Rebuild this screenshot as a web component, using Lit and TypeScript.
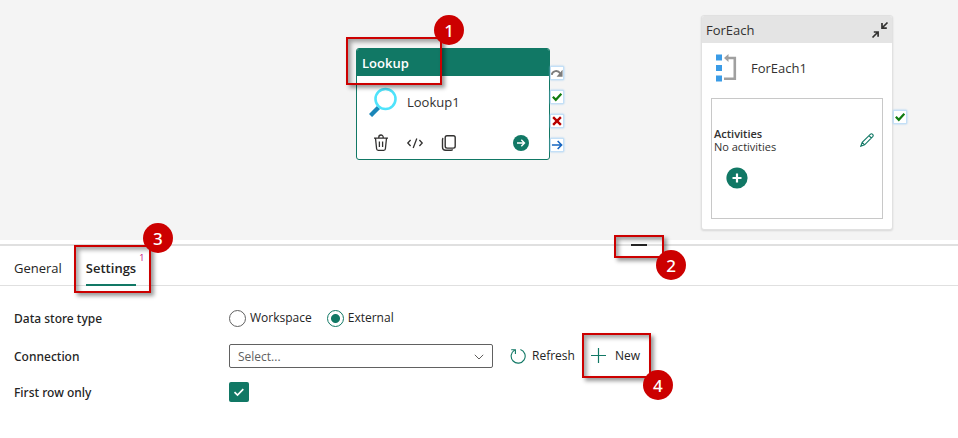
import { LitElement, html, css, svg, nothing } from "lit";
import { customElement, property } from "lit/decorators.js";

const icons = {
  magnifier: html`<svg width="28" height="30" viewBox="0 0 28 30" aria-hidden="true">
    <path d="M1.500 28.500 9.500 20.500" stroke="#1a86b8" stroke-width="4.4" fill="none" />
    <circle cx="16.5" cy="12" r="10" fill="#fff" stroke="#4fe3fb" stroke-width="2.6" />
  </svg>`,
  trash: html`<svg width="18" height="18" viewBox="0 0 18 18" fill="none" stroke="#323130" stroke-width="1.3" aria-hidden="true">
    <path d="M2 4.1H16M6.8 4V3.2a2.2 2.2 0 0 1 4.4 0V4M3.5 4.3l1.1 10.5a1.6 1.6 0 0 0 1.6 1.5h5.6a1.6 1.6 0 0 0 1.6-1.5L14.5 4.3M7.4 7.4v5.6M10.6 7.4v5.6" />
  </svg>`,
  code: html`<svg width="18" height="18" viewBox="0 0 18 18" fill="none" stroke="#323130" stroke-width="1.3" aria-hidden="true">
    <path d="M4.600 6 1.800 9l2.800 3M13.400 6 16.200 9l-2.800 3M10.800 4.500 7.200 14" />
  </svg>`,
  copy: html`<svg width="18" height="18" viewBox="0 0 18 18" fill="none" stroke="#323130" stroke-width="1.4" aria-hidden="true">
    <rect x="5.2" y="1.7" width="10" height="12.4" rx="1.8" />
    <path d="M3.2 4.2c-.6.4-.7.9-.7 1.6v7.3a3.2 3.2 0 0 0 3.2 3.2h5.2c.8 0 1.4-.3 1.7-.9" />
  </svg>`,
  go: html`<svg width="18" height="18" viewBox="0 0 18 18" aria-hidden="true">
    <circle cx="9" cy="9" r="8" fill="#117865" />
    <path d="M5 9h7.5M9.3 5.8 12.5 9l-3.2 3.2" fill="none" stroke="#fff" stroke-width="1.4" />
  </svg>`,
  collapse: html`<svg width="18" height="18" viewBox="0 0 18 18" fill="none" stroke="#323130" stroke-width="1.7" aria-hidden="true">
    <path d="M16.5 1.500 11.500 6.500M11 2v5.100h4.800M1.500 16.500l5-5M2.800 11h4.300v4.800" />
  </svg>`,
  loop: html`<svg width="22" height="28" viewBox="0 0 22 28" aria-hidden="true">
    <path d="M0 .5h6v6H0zM0 11h6v6H0zM0 21.5h6v6H0z" fill="#3a9be6" />
    <path d="M8 4 12.500 0v8z" fill="#a0a0a0" />
    <path d="M11 4H18.800V24.800H8" fill="none" stroke="#a0a0a0" stroke-width="2.6" />
  </svg>`,
  pencil: html`<svg width="14" height="14" viewBox="0 0 14 14" fill="none" stroke="#117865" stroke-width="1.1" aria-hidden="true">
    <path d="M10.300 1.300a1.700 1.700 0 0 1 2.400 2.400L4.600 11.800.8 13.200 2.200 9.400zM9 2.700 11.300 5M2.200 9.400l2.400 2.400" />
  </svg>`,
  add: html`<svg width="22" height="22" viewBox="0 0 22 22" aria-hidden="true">
    <circle cx="11" cy="11" r="10.6" fill="#117865" />
    <path d="M6.500 11h9M11 6.500v9" stroke="#fff" stroke-width="2.2" />
  </svg>`,
  refresh: html`<svg width="16" height="16" viewBox="0 0 16 16" fill="none" stroke="#117865" stroke-width="1.1" aria-hidden="true">
    <path d="M10.400 1.500A7 7 0 1 1 4.600 2.100M1.200 1.700h4.200v4.200" />
  </svg>`,
  plus: html`<svg width="16" height="16" viewBox="0 0 16 16" stroke="#117865" stroke-width="1.2" aria-hidden="true">
    <path d="M0 7.500h15M7.500 0v15" />
  </svg>`,
  chevron: html`<svg width="10" height="6" viewBox="0 0 10 6" fill="none" stroke="#605e5c" stroke-width="1" aria-hidden="true">
    <path d="M.8.8 5 5 9.200.8" />
  </svg>`,
};

const portMarks: Record<string, unknown> = {
  Skipped: svg`<path d="M.8 8.500C1.500 3.800 7.500 2.800 10 7" fill="none" stroke="#7d7d7d" stroke-width="2" /><path d="M12.500 3v7.500H6z" fill="#7d7d7d" />`,
  Succeeded: svg`<path d="M2 6.200 5.200 9.500 11.200 3" fill="none" stroke="#107c10" stroke-width="2.400" />`,
  Failed: svg`<path d="M2.300 2.300 10.700 10.700M10.700 2.300 2.300 10.700" stroke="#b80000" stroke-width="2.600" />`,
  Completed: svg`<path d="M1 6.500H11.500M7.200 2.200 11.500 6.500 7.200 10.800" fill="none" stroke="#1565c0" stroke-width="1.700" />`,
};

@customElement("step-callout")
export class StepCallout extends LitElement {
  @property({ type: Number }) step = 0;

  static styles = css`
    :host {
      position: absolute;
      z-index: 2;
      box-sizing: border-box;
      border: 2px solid #cc0000;
      box-shadow:
        3px 3px 4px rgba(0, 0, 0, 0.4),
        inset 3px 3px 4px rgba(0, 0, 0, 0.35);
      pointer-events: none;
    }
    .badge {
      position: absolute;
      right: -24px;
      top: -24px;
      display: grid;
      place-items: center;
      width: 30px;
      height: 30px;
      border-radius: 50%;
      background: #cc0000;
      color: #fff;
      font: 500 17px/1 "Noto Sans", "Open Sans", sans-serif;
    }
    :host([low]) .badge {
      top: auto;
      bottom: -24px;
    }
  `;

  render() {
    return html`<span class="badge">${this.step}</span>`;
  }
}

@customElement("activity-ports")
export class ActivityPorts extends LitElement {
  @property({ attribute: false }) outcomes: string[] = [];

  static styles = css`
    :host {
      position: absolute;
      left: calc(100% + 1px);
      display: flex;
      flex-direction: column;
      gap: 10px;
    }
    .port {
      display: block;
      box-sizing: border-box;
      width: 14px;
      height: 14px;
      padding: 0;
      border: 1px solid #c3dff7;
      border-radius: 1px;
      background: #fff;
      box-shadow: 0 0 2px #8fc3ee;
    }
    svg {
      display: block;
      width: 12px;
      height: 12px;
    }
  `;

  render() {
    return this.outcomes.map(
      (o) => html`<button class="port" aria-label=${o}><svg viewBox="0 0 13 13">${portMarks[o]}</svg></button>`,
    );
  }
}

@customElement("app-root")
export class AppRoot extends LitElement {
  static styles = css`
    :host {
      display: block;
      min-height: 100vh;
      background: #fff;
      color: #242424;
      font: 12px/16px "Open Sans", "Noto Sans", sans-serif;
    }
    button,
    select {
      font: inherit;
      color: inherit;
    }
    button {
      display: flex;
      align-items: center;
      padding: 0;
      border: 0;
      background: none;
    }
    svg {
      display: block;
      flex: none;
    }
    .canvas {
      position: relative;
      height: 240px;
      background: #f4f4f4;
    }
    .node {
      position: absolute;
      box-sizing: border-box;
      border: 1px solid #e1e1e1;
      border-radius: 3px;
      background: #fff;
      color: #323130;
      font-size: 13px;
    }
    .node-head {
      display: flex;
      align-items: center;
      justify-content: space-between;
      height: 27px;
      padding: 0 3px 0 4px;
      border-radius: 2px 2px 0 0;
      background: #e4e4e4;
    }
    .lookup {
      left: 356px;
      top: 48px;
      width: 194px;
      padding-bottom: 1px;
      border-color: #117865;
    }
    .lookup .node-head {
      padding: 0 5px;
      background: #117865;
      color: #fff;
      font-weight: 600;
    }
    .foreach {
      left: 701px;
      top: 15px;
      width: 192px;
      padding-bottom: 10px;
      box-shadow: 0 1px 2px rgba(0, 0, 0, 0.12);
    }
    .node-title {
      display: flex;
      align-items: center;
      gap: 10px;
      height: 52px;
      padding: 0 12px;
    }
    .foreach .node-title {
      gap: 13px;
      height: 50px;
      padding: 0 14px;
      margin-bottom: 5px;
    }
    .node-actions {
      display: flex;
      align-items: center;
      gap: 16px;
      height: 30px;
      padding: 0 19px 0 15px;
    }
    .push {
      margin-left: auto;
    }
    .lookup activity-ports {
      top: 17px;
    }
    .foreach activity-ports {
      top: 94px;
    }
    .inner {
      box-sizing: border-box;
      height: 121px;
      margin: 0 9px;
      padding: 28px 8px 0 2px;
      border: 1px solid #c8c8c8;
      font-size: 11px;
      line-height: 13px;
    }
    .inner-row {
      display: flex;
      align-items: center;
      justify-content: space-between;
    }
    .strong {
      font-weight: 600;
    }
    .inner .add {
      margin: 14px 0 0 12px;
    }
    .divider {
      display: flex;
      height: 10px;
      padding-left: 64.1%;
      background: linear-gradient(#e0e0e0, #e0e0e0) 0 4px / 100% 2px no-repeat;
    }
    .handle {
      position: relative;
      justify-content: center;
      width: 50px;
      height: 10px;
    }
    .handle-bar {
      width: 16px;
      height: 2px;
      background: #242424;
    }
    .tabs {
      display: flex;
      gap: 24px;
      height: 35px;
      padding: 0 14px;
      border-bottom: 1px solid #e0e0e0;
      font-size: 13px;
    }
    .tab {
      position: relative;
      box-sizing: border-box;
      height: 36px;
      padding-top: 2px;
      border-bottom: 2px solid transparent;
    }
    .tab[aria-selected="true"] {
      border-color: #117865;
      font-weight: 600;
    }
    .count {
      position: absolute;
      left: calc(100% + 3px);
      top: 0;
      color: #c4007a;
      font-size: 9px;
      font-weight: 400;
    }
    .form {
      display: grid;
      grid-template-columns: 215px 1fr;
      align-items: center;
      row-gap: 14px;
      padding: 20px 14px;
    }
    .label {
      padding-top: 1px;
      font-family: "Noto Sans", "Open Sans", sans-serif;
      font-weight: 500;
    }
    .controls {
      display: flex;
      align-items: center;
      height: 24px;
    }
    .controls.short {
      height: 20px;
    }
    .option {
      display: flex;
      align-items: center;
      gap: 4px;
      margin-right: 15px;
    }
    input {
      appearance: none;
      margin: 0;
      flex: none;
    }
    .radio {
      width: 17px;
      height: 17px;
      border: 1px solid #616161;
      border-radius: 50%;
      box-sizing: border-box;
    }
    .radio:checked {
      border-color: #117865;
      background: radial-gradient(circle, #117865 4px, transparent 5px);
    }
    .select {
      position: relative;
      width: 264px;
      height: 24px;
    }
    .select select {
      appearance: none;
      box-sizing: border-box;
      width: 100%;
      height: 24px;
      padding: 1px 8px 0;
      border: 1px solid #616161;
      border-radius: 2px;
      background: #fff;
      color: #616161;
    }
    .select svg {
      position: absolute;
      right: 9px;
      top: 10px;
      pointer-events: none;
    }
    .command {
      position: relative;
      gap: 6px;
      margin-left: 17px;
    }
    .command.new {
      gap: 8px;
      margin-left: 16px;
    }
    .check {
      display: grid;
      width: 20px;
      height: 20px;
      position: relative;
    }
    .check input {
      width: 20px;
      height: 20px;
      border-radius: 2px;
      background: #117865;
    }
    .check svg {
      position: absolute;
      inset: 0;
      pointer-events: none;
    }
    .on-head {
      left: -11px;
      top: -12px;
      width: 96px;
      height: 48px;
    }
    .on-handle {
      left: 0;
      top: -5px;
      width: 50px;
      height: 23px;
    }
    .on-tab {
      left: -12px;
      top: -5px;
      width: 77px;
      height: 48px;
    }
    .on-new {
      left: -9px;
      top: -15px;
      width: 69px;
      height: 45px;
    }
  `;

  private tab(name: string, selected: boolean, issues?: number) {
    return html`<button class="tab" role="tab" aria-selected=${selected}>
      ${name}${issues
        ? html`<span class="count">${issues}</span><step-callout class="on-tab" .step=${3}></step-callout>`
        : nothing}
    </button>`;
  }

  private radio(name: string, checked: boolean) {
    return html`<label class="option"
      ><input class="radio" type="radio" name="store" .checked=${checked} />${name}</label
    >`;
  }

  render() {
    return html`
      <main>
        <section class="canvas" aria-label="Pipeline canvas">
          <article class="node lookup">
            <header class="node-head">Lookup</header>
            <div class="node-title">${icons.magnifier}<span>Lookup1</span></div>
            <div class="node-actions">
              <button aria-label="Delete">${icons.trash}</button>
              <button aria-label="View code">${icons.code}</button>
              <button aria-label="Copy">${icons.copy}</button>
              <button class="push" aria-label="Go">${icons.go}</button>
            </div>
            <activity-ports .outcomes=${["Skipped", "Succeeded", "Failed", "Completed"]}></activity-ports>
            <step-callout class="on-head" .step=${1}></step-callout>
          </article>
          <article class="node foreach">
            <header class="node-head">
              ForEach<button aria-label="Collapse">${icons.collapse}</button>
            </header>
            <div class="node-title">${icons.loop}<span>ForEach1</span></div>
            <div class="inner">
              <div class="inner-row">
                <div>
                  <div class="strong">Activities</div>
                  <div>No activities</div>
                </div>
                <button aria-label="Edit activities">${icons.pencil}</button>
              </div>
              <button class="add" aria-label="Add activity">${icons.add}</button>
            </div>
            <activity-ports .outcomes=${["Succeeded"]}></activity-ports>
          </article>
        </section>
        <div class="divider">
          <button class="handle" aria-label="Collapse panel">
            <span class="handle-bar"></span>
            <step-callout class="on-handle" low .step=${2}></step-callout>
          </button>
        </div>
        <nav class="tabs" role="tablist">${this.tab("General", false)}${this.tab("Settings", true, 1)}</nav>
        <form class="form">
          <span class="label" id="store-label">Data store type</span>
          <div class="controls" role="radiogroup" aria-labelledby="store-label">
            ${this.radio("Workspace", false)}${this.radio("External", true)}
          </div>
          <label class="label" for="connection">Connection</label>
          <div class="controls">
            <span class="select">
              <select id="connection"><option>Select...</option></select>
              ${icons.chevron}
            </span>
            <button class="command" type="button">${icons.refresh}Refresh</button>
            <button class="command new" type="button">
              ${icons.plus}New<step-callout class="on-new" low .step=${4}></step-callout>
            </button>
          </div>
          <label class="label" for="first-row">First row only</label>
          <div class="controls short">
            <span class="check">
              <input id="first-row" type="checkbox" .checked=${true} />
              <svg width="20" height="20" viewBox="0 0 20 20" fill="none" stroke="#fff" stroke-width="1.7">
                <path d="M5.500 10.200 8.500 13 14.300 7.200" />
              </svg>
            </span>
          </div>
        </form>
      </main>
    `;
  }
}
